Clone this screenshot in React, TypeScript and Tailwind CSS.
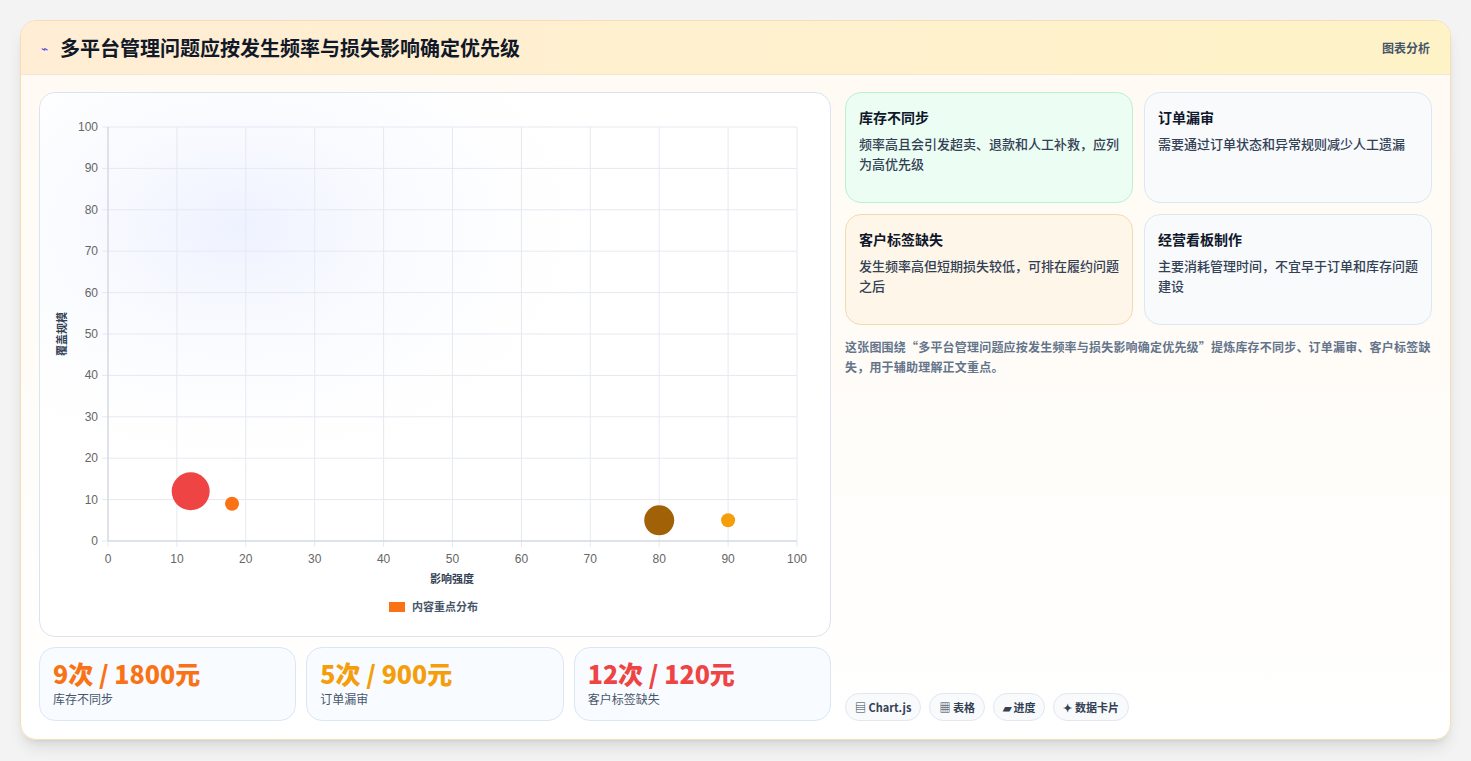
import React from "react";

const F = { fontFamily: '"Noto Sans CJK SC", "Noto Sans", sans-serif' };

function Chart() {
  const x0 = 68, x1 = 757, y0 = 448, y1 = 34;
  const sx = (v: number) => x0 + ((x1 - x0) * v) / 100;
  const sy = (v: number) => y0 - ((y0 - y1) * v) / 100;
  const ticks = [0, 10, 20, 30, 40, 50, 60, 70, 80, 90, 100];
  return (
    <svg width="791" height="541" style={{ fontFamily: '"Liberation Sans", "Noto Sans CJK SC", sans-serif' }}>
      <defs>
        <radialGradient id="g" cx="0.25" cy="0.25" r="0.5">
          <stop offset="0" stopColor="#eef2ff" />
          <stop offset="1" stopColor="#ffffff" stopOpacity="0" />
        </radialGradient>
      </defs>
      <rect width="791" height="541" fill="url(#g)" />
      {ticks.map((t) => (
        <g key={t}>
          <line x1={sx(t)} x2={sx(t)} y1={y1} y2={y0 + 6} stroke="#e5e9f0" />
          <line x1={x0 - 6} x2={x1} y1={sy(t)} y2={sy(t)} stroke="#e5e9f0" />
          <text x={x0 - 10} y={sy(t) + 4} fontSize="12" fill="#666" textAnchor="end">{t}</text>
          <text x={sx(t)} y={y0 + 22} fontSize="12" fill="#666" textAnchor="middle">{t}</text>
        </g>
      ))}
      <line x1={x0} x2={x0} y1={y1} y2={y0} stroke="#cbd2dc" />
      <line x1={x0} x2={x1} y1={y0} y2={y0} stroke="#cbd2dc" />
      <text x={412} y={490} fontSize="11" fontWeight="700" fill="#334155" textAnchor="middle" style={F}>影响强度</text>
      <text x={0} y={0} fontSize="11" fontWeight="700" fill="#334155" textAnchor="middle" transform="translate(26,241) rotate(-90)" style={F}>覆盖规模</text>
      <circle cx={sx(12)} cy={sy(12)} r={19} fill="#ef4444" />
      <circle cx={sx(18)} cy={sy(9)} r={7} fill="#f97316" />
      <circle cx={sx(80)} cy={sy(5)} r={15} fill="#a16207" />
      <circle cx={sx(90)} cy={sy(5)} r={7} fill="#f59e0b" />
      <rect x={349} y={509} width={16} height={10} fill="#f97316" />
      <text x={372} y={518} fontSize="11" fontWeight="700" fill="#475569" style={F}>内容重点分布</text>
    </svg>
  );
}

function Stat({ v, label, color }: { v: string; label: string; color: string }) {
  return (
    <div className="flex-1 rounded-2xl border border-[#dbe7f5] bg-[#f8fbff] px-[13px] pt-[8px] pb-[12px]">
      <div className={`text-[25px] font-extrabold leading-[34px] ${color}`}>{v}</div>
      <div className="text-[12px] text-[#475569]">{label}</div>
    </div>
  );
}

function Card({ t, d, cls }: { t: string; d: string; cls: string }) {
  return (
    <div className={`rounded-2xl border px-[13px] pt-[14px] h-[111px] ${cls}`}>
      <div className="text-[14px] font-bold text-[#0f172a]">{t}</div>
      <div className="mt-[6px] text-[13px] leading-[20px] font-medium text-[#334155]">{d}</div>
    </div>
  );
}

export default function App() {
  return (
    <div className="w-[1471px] h-[761px] bg-[#f3f3f3] pt-[20px] pl-[20px]" style={F}>
      <div className="w-[1431px] h-[720px] rounded-[16px] border border-[#f5deb3] bg-gradient-to-b from-[#fffaf2] to-white shadow-lg overflow-hidden flex flex-col">
        <div className="h-[55px] flex items-center justify-between px-[20px] bg-gradient-to-r from-[#ffedd5] to-[#fef3c7] border-b border-[#f1e6d2]">
          <div className="flex items-center gap-[12px]">
            <span className="text-[12px] text-[#4f46e5]">⌁</span>
            <span className="text-[20px] font-bold text-[#111827]">多平台管理问题应按发生频率与损失影响确定优先级</span>
          </div>
          <span className="text-[12px] font-bold text-[#475569]">图表分析</span>
        </div>
        <div className="flex flex-1 gap-[14px] px-[18px] pt-[17px] pb-[18px]">
          <div className="w-[792px] flex flex-col gap-[10px]">
            <div className="h-[545px] rounded-2xl border border-[#dbe3ef] bg-white overflow-hidden">
              <Chart />
            </div>
            <div className="flex gap-[10px] h-[74px]">
              <Stat v="9次 / 1800元" label="库存不同步" color="text-[#f97316]" />
              <Stat v="5次 / 900元" label="订单漏审" color="text-[#f59e0b]" />
              <Stat v="12次 / 120元" label="客户标签缺失" color="text-[#ef4444]" />
            </div>
          </div>
          <div className="flex-1 flex flex-col">
            <div className="grid grid-cols-2 gap-[11px]">
              <Card t="库存不同步" d="频率高且会引发超卖、退款和人工补救，应列为高优先级" cls="bg-[#ecfdf3] border-[#bbf0d0]" />
              <Card t="订单漏审" d="需要通过订单状态和异常规则减少人工遗漏" cls="bg-[#f8fafc] border-[#dbe7f5]" />
              <Card t="客户标签缺失" d="发生频率高但短期损失较低，可排在履约问题之后" cls="bg-[#fff6ea] border-[#f5d9b0]" />
              <Card t="经营看板制作" d="主要消耗管理时间，不宜早于订单和库存问题建设" cls="bg-[#f8fafc] border-[#dbe7f5]" />
            </div>
            <p className="mt-[12px] text-[12px] leading-[20px] font-semibold text-[#64748b] tracking-[0.2px]">
              这张图围绕“多平台管理问题应按发生频率与损失影响确定优先级”提炼库存不同步、订单漏审、客户标签缺失，用于辅助理解正文重点。
            </p>
            <div className="mt-auto flex gap-[8px]">
              {["▤ Chart.js", "▦ 表格", "▰ 进度", "✦ 数据卡片"].map((t) => (
                <span key={t} className="h-[28px] px-[9px] flex items-center rounded-full border border-[#e2e8f0] bg-[#f8fafc] text-[11px] font-bold text-[#334155]">{t}</span>
              ))}
            </div>
          </div>
        </div>
      </div>
    </div>
  );
}
